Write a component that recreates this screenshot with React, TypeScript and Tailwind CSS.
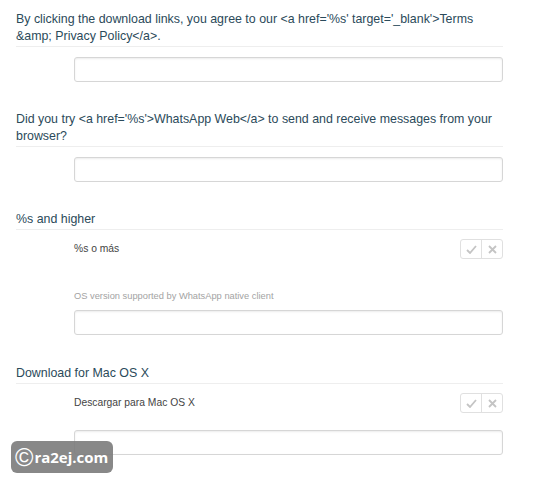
export default function App() {
  return (
    <div className="relative w-[550px] h-[484px] overflow-hidden bg-white font-['Liberation_Sans',Arial,sans-serif]">
      <div className="pl-[16px] pt-[11px] w-[503px]">
        <Heading>
          By clicking the download links, you agree to our &lt;a href='%s' target='_blank'&gt;Terms &amp;amp; Privacy Policy&lt;/a&gt;.
        </Heading>
        <TextBox className="mt-[10px]" />

        <Heading className="mt-[29px]">
          Did you try &lt;a href='%s'&gt;WhatsApp Web&lt;/a&gt; to send and receive messages from your browser?
        </Heading>
        <TextBox className="mt-[10px]" />

        <Heading className="mt-[29px]">%s and higher</Heading>
        <Suggestion text="%s o más" />
        <p className="ml-[58px] mt-[31px] text-[9.3px] leading-[12px] text-[#a3a3a3]">
          OS version supported by WhatsApp native client
        </p>
        <TextBox className="mt-[8px]" />

        <Heading className="mt-[30px]">Download for Mac OS X</Heading>
        <Suggestion text="Descargar para Mac OS X" />
        <TextBox className="mt-[17px]" />
      </div>

      <div className="absolute left-[11px] top-[441px] w-[102px] h-[32px] rounded-[6px] bg-[#7b7b7b]/90 flex items-center pl-[4px] gap-[1px] text-white">
        <span className="text-[25px] leading-none font-light">©</span>
        <span className="text-[15px] leading-none font-bold font-['Open_Sans',sans-serif]">ra2ej.com</span>
      </div>
    </div>
  );
}

function Heading({ children, className = '' }: { children: React.ReactNode; className?: string }) {
  return (
    <h3 className={`pb-[1px] border-b border-[#eeeeee] text-[12.4px] leading-[17px] font-normal text-[#2b4a5a] ${className}`}>
      {children}
    </h3>
  );
}

function TextBox({ className = '' }: { className?: string }) {
  return (
    <div
      className={`ml-[58px] w-[429px] h-[25px] rounded-[3px] border border-[#d6d6d6] bg-white shadow-[inset_0_1px_2px_rgba(0,0,0,0.08)] ${className}`}
    />
  );
}

function Suggestion({ text }: { text: string }) {
  return (
    <div className="ml-[58px] mt-[9px] flex items-start justify-between">
      <span className="mt-[2px] text-[10.3px] leading-[15px] text-[#444444]">{text}</span>
      <div className="flex h-[20px] w-[43px] rounded-[3px] border border-[#e0e0e0] bg-white">
        <button className="flex flex-1 items-center justify-center border-r border-[#e0e0e0]">
          <svg width="11" height="9" viewBox="0 0 11 9" fill="none">
            <path d="M1 5l3 3 6-7" stroke="#c4c4c4" strokeWidth="1.8" />
          </svg>
        </button>
        <button className="flex flex-1 items-center justify-center">
          <svg width="9" height="9" viewBox="0 0 9 9" fill="none">
            <path d="M1 1l7 7M8 1l-7 7" stroke="#c4c4c4" strokeWidth="1.8" />
          </svg>
        </button>
      </div>
    </div>
  );
}
